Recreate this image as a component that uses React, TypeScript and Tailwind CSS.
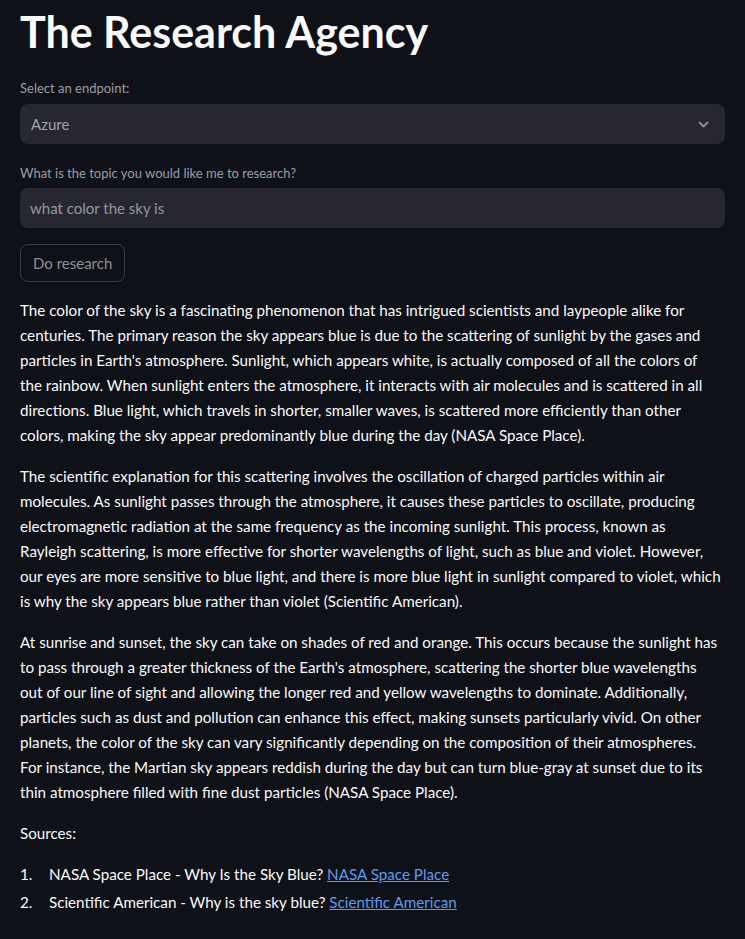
const paragraphs: string[][] = [
  [
    "The color of the sky is a fascinating phenomenon that has intrigued scientists and laypeople alike for",
    "centuries. The primary reason the sky appears blue is due to the scattering of sunlight by the gases and",
    "particles in Earth's atmosphere. Sunlight, which appears white, is actually composed of all the colors of",
    "the rainbow. When sunlight enters the atmosphere, it interacts with air molecules and is scattered in all",
    "directions. Blue light, which travels in shorter, smaller waves, is scattered more efficiently than other",
    "colors, making the sky appear predominantly blue during the day (NASA Space Place).",
  ],
  [
    "The scientific explanation for this scattering involves the oscillation of charged particles within air",
    "molecules. As sunlight passes through the atmosphere, it causes these particles to oscillate, producing",
    "electromagnetic radiation at the same frequency as the incoming sunlight. This process, known as",
    "Rayleigh scattering, is more effective for shorter wavelengths of light, such as blue and violet. However,",
    "our eyes are more sensitive to blue light, and there is more blue light in sunlight compared to violet, which",
    "is why the sky appears blue rather than violet (Scientific American).",
  ],
  [
    "At sunrise and sunset, the sky can take on shades of red and orange. This occurs because the sunlight has",
    "to pass through a greater thickness of the Earth's atmosphere, scattering the shorter blue wavelengths",
    "out of our line of sight and allowing the longer red and yellow wavelengths to dominate. Additionally,",
    "particles such as dust and pollution can enhance this effect, making sunsets particularly vivid. On other",
    "planets, the color of the sky can vary significantly depending on the composition of their atmospheres.",
    "For instance, the Martian sky appears reddish during the day but can turn blue-gray at sunset due to its",
    "thin atmosphere filled with fine dust particles (NASA Space Place).",
  ],
];

const sources = [
  { text: "NASA Space Place - Why Is the Sky Blue?", link: "NASA Space Place" },
  { text: "Scientific American - Why is the sky blue?", link: "Scientific American" },
];

export default function App() {
  return (
    <div className="min-h-screen bg-[#0e1117] text-[#fafafa] font-['Lato',sans-serif]">
      <div className="px-5 pt-[5px] pb-8">
        <h1 className="text-[43px] font-bold leading-[54px]">The Research Agency</h1>

        <div className="mt-[19px]">
          <label className="block text-[13px] leading-[20px] text-[#9c9da3]">Select an endpoint:</label>
          <div className="mt-[6px] flex h-10 items-center justify-between rounded-lg bg-[#262730] pl-[11px] pr-[16px] text-[15px] text-[#a3a4a9]">
            <span>Azure</span>
            <svg width="11" height="7" viewBox="0 0 11 7" fill="none" stroke="#8b8c94" strokeWidth="2" strokeLinecap="round" strokeLinejoin="round">
              <path d="M1.5 1.5 5.5 5.5 9.5 1.5" />
            </svg>
          </div>
        </div>

        <div className="mt-[19px]">
          <label className="block text-[13px] leading-[20px] text-[#9c9da3]">What is the topic you would like me to research?</label>
          <div className="mt-[5px] flex h-10 items-center rounded-lg bg-[#262730] px-[10px] text-[15px] text-[#95969c]">
            what color the sky is
          </div>
        </div>

        <button className="mt-4 flex h-[38px] items-center rounded-lg border border-[#3d3e45] px-3 text-[15px] text-[#8f9096]">
          Do research
        </button>

        <div className="mt-4 text-[15.2px] leading-[25px]">
          {paragraphs.map((lines, i) => (
            <p key={i} className="mb-[16px] whitespace-nowrap">
              {lines.map((line, j) => (
                <span key={j}>
                  {line}
                  {j < lines.length - 1 && <br />}
                </span>
              ))}
            </p>
          ))}
          <p className="mb-[16px]">Sources:</p>
          <ol className="flex flex-col gap-[3px]">
            {sources.map((s, i) => (
              <li key={i} className="flex">
                <span className="w-[29px]">{i + 1}.</span>
                <span>
                  {s.text}{" "}
                  <a href="#" className="text-[#5b9cf0] underline">
                    {s.link}
                  </a>
                </span>
              </li>
            ))}
          </ol>
        </div>
      </div>
    </div>
  );
}
